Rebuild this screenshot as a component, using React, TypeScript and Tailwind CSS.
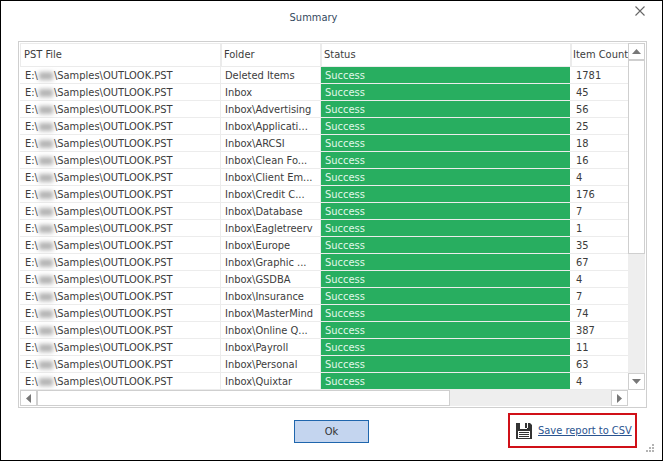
import React, { useState } from "react";

const PATH_END = "\\Samples\\OUTLOOK.PST";

const COLUMNS = ["PST File", "Folder", "Status", "Item Count"];

const rows = [
  { folder: "Deleted Items", count: 1781 },
  { folder: "Inbox", count: 45 },
  { folder: "Inbox\\Advertising", count: 56 },
  { folder: "Inbox\\Applicati...", count: 25 },
  { folder: "Inbox\\ARCSI", count: 18 },
  { folder: "Inbox\\Clean Fo...", count: 16 },
  { folder: "Inbox\\Client Em...", count: 4 },
  { folder: "Inbox\\Credit C...", count: 176 },
  { folder: "Inbox\\Database", count: 7 },
  { folder: "Inbox\\Eagletreerv", count: 1 },
  { folder: "Inbox\\Europe", count: 35 },
  { folder: "Inbox\\Graphic ...", count: 67 },
  { folder: "Inbox\\GSDBA", count: 4 },
  { folder: "Inbox\\Insurance", count: 7 },
  { folder: "Inbox\\MasterMind", count: 74 },
  { folder: "Inbox\\Online Q...", count: 387 },
  { folder: "Inbox\\Payroll", count: 11 },
  { folder: "Inbox\\Personal", count: 63 },
  { folder: "Inbox\\Quixtar", count: 4 },
];

const Arrow = ({ points }: { points: string }) => (
  <svg width="9" height="9" viewBox="0 0 9 9" fill="#777777">
    <polygon points={points} />
  </svg>
);

const SaveIcon = () => (
  <svg width="16" height="16" viewBox="0 0 16 16" className="shrink-0">
    <path d="M0 0h4v6h7V0h3l2 2v14H0z" fill="#333333" />
    <path d="M9 0h2v5H9z" fill="#333333" />
    <path d="M2 8h12v7H2z" fill="#ffffff" />
    <path d="M3 9h10v1H3zM3 11h10v1H3zM3 13h10v1H3z" fill="#333333" />
    <path d="M4 0h5v5H4zM11 0h1v5h-1z" fill="#ffffff" />
  </svg>
);

const ReportTable = () => {
  return (
    <table className="w-full table-fixed border-separate border-spacing-0 text-left leading-[14px] text-[#3c3c3c]">
      <colgroup>
        <col className="w-[200px]" />
        <col className="w-[100px]" />
        <col />
        <col className="w-[58px]" />
      </colgroup>
      <thead>
        <tr className="h-6">
          {COLUMNS.map((name) => (
            <th
              key={name}
              className="whitespace-nowrap border-b border-l-2 border-t border-[#ebebeb] p-0 pl-0.5 font-normal first:border-l first:pl-[3px] last:pl-px"
            >
              {name}
            </th>
          ))}
        </tr>
      </thead>
      <tbody>
        {rows.map((row) => (
          <tr key={row.folder} className="h-[17px] whitespace-nowrap">
            <td className="border-b border-[#ececec] p-0 pl-[5px] pt-0.5">
              <span className="flex items-center">
                E:\
                <span className="mx-px h-2 w-[14px] bg-[#b4b4b4] blur-[2px]" />
                {PATH_END}
              </span>
            </td>
            <td className="border-b border-l border-[#ececec] p-0 pl-1 pt-0.5">{row.folder}</td>
            <td className="border-b border-l border-[#ececec] bg-[#28ae60] p-0 pl-1 pt-0.5 text-[#e2f8ea]">
              Success
            </td>
            <td className="border-b border-[#ececec] p-0 pl-[6px] pt-0.5">{row.count}</td>
          </tr>
        ))}
      </tbody>
    </table>
  );
};

export default function App() {
  const [isOpen, setIsOpen] = useState<boolean>(true);

  const closeHandler = () => {
    setIsOpen(false);
  };

  if (!isOpen) {
    return null;
  }
  return (
    <div className="relative flex min-h-screen flex-col border border-black bg-white font-['DejaVu_Sans_Condensed','DejaVu_Sans',sans-serif] text-[11px] leading-4">
      <header className="grid h-10 grid-cols-[1fr_auto_1fr] px-3">
        <h1 className="col-start-2 pr-9 pt-[9px] text-[#34495e]">Summary</h1>
        <button
          aria-label="Close"
          onClick={closeHandler}
          className="h-5 w-5 justify-self-end p-[5px]"
        >
          <svg width="10" height="10" viewBox="0 0 10 10" stroke="#666666" strokeWidth="1.1">
            <path d="M.5.5l9 9M9.500.5l-9 9" />
          </svg>
        </button>
      </header>

      <main className="ml-[17px] mr-[15px] border border-[#cfcfcf] p-px">
        <div className="flex">
          <div className="min-w-0 flex-1">
            <ReportTable />
          </div>
          {/* vertical scroll bar */}
          <div className="flex w-[17px] flex-col bg-[#eeeeee]">
            <button
              aria-label="Scroll up"
              className="flex h-[17px] items-center justify-center border border-[#cfcfcf] bg-white"
            >
              <Arrow points="0,7 4.5,2 9,7" />
            </button>
            <div className="h-[194px] border border-[#cfcfcf] bg-white" />
            <button
              aria-label="Scroll down"
              className="mt-auto flex h-[17px] items-center justify-center border border-[#cfcfcf] bg-white"
            >
              <Arrow points="0,2 4.5,7 9,2" />
            </button>
          </div>
        </div>
        {/* horizontal scroll bar */}
        <div className="mr-[17px] flex h-4 bg-[#eeeeee]">
          <button
            aria-label="Scroll left"
            className="flex w-[17px] items-center justify-center border border-[#cfcfcf] bg-white"
          >
            <Arrow points="7,0 2,4.5 7,9" />
          </button>
          <div className="w-[68%] border border-[#cfcfcf] bg-white" />
          <button
            aria-label="Scroll right"
            className="ml-auto flex w-[17px] items-center justify-center border border-[#cfcfcf] bg-white"
          >
            <Arrow points="2,0 7,4.5 2,9" />
          </button>
        </div>
      </main>

      <footer className="grid grid-cols-[1fr_auto_1fr] px-[25px] pt-[5px]">
        <button
          onClick={closeHandler}
          className="col-start-2 mt-[7px] h-[23px] w-[75px] border border-[#1f66ad] bg-[#c4d5ef] text-[#333333]"
        >
          Ok
        </button>
        <div className="flex h-[35px] w-[129px] items-center gap-1.5 justify-self-end border-2 border-[#d01018] px-[6px]">
          <SaveIcon />
          <a href="#save" className="whitespace-nowrap text-[#2a5490] underline">
            Save report to CSV
          </a>
        </div>
      </footer>

      <svg
        width="8"
        height="8"
        viewBox="0 0 8 8"
        fill="#b4b4b4"
        className="absolute bottom-2 right-2"
      >
        <path d="M6 0h2v2H6zM3 3h2v2H3zM6 3h2v2H6zM0 6h2v2H0zM3 6h2v2H3zM6 6h2v2H6z" />
      </svg>
    </div>
  );
}
